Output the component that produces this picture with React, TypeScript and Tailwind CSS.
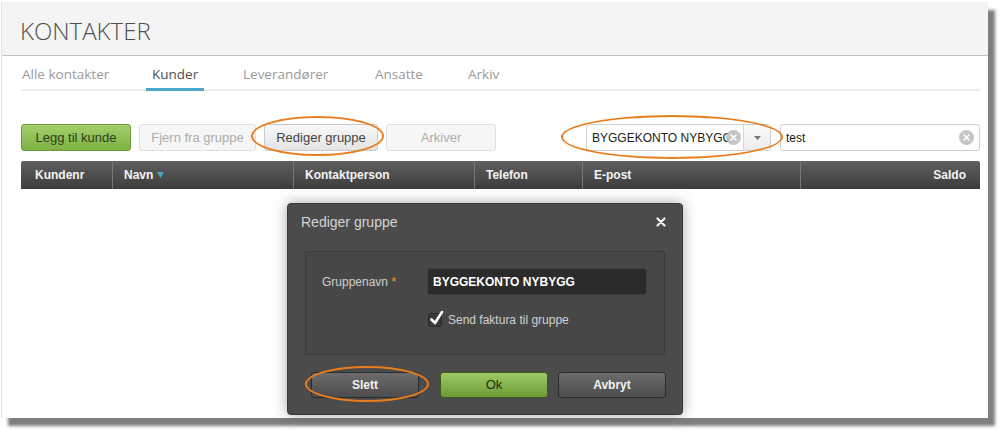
import React from "react";

const sans = { fontFamily: '"Liberation Sans", Arial, sans-serif' };

function ClearDot({ className = "" }: { className?: string }) {
  return (
    <span
      className={`flex h-[15px] w-[15px] items-center justify-center rounded-full bg-[#c4c4c4] ${className}`}
    >
      <svg width="7" height="7" viewBox="0 0 7 7">
        <path d="M1 1 L6 6 M6 1 L1 6" stroke="#fff" strokeWidth="1.6" strokeLinecap="round" />
      </svg>
    </span>
  );
}

function ToolButton({
  label,
  width,
  variant,
}: {
  label: string;
  width: string;
  variant: "green" | "disabled" | "normal";
}) {
  const styles = {
    green:
      "bg-gradient-to-b from-[#a4cf6a] to-[#7eb144] border-[#6f9c3a] text-[#2c4016]",
    disabled: "bg-[#f6f6f6] border-[#dedede] text-[#adadad]",
    normal:
      "bg-gradient-to-b from-[#f8f8f8] to-[#e4e4e4] border-[#c9c9c9] text-[#454545]",
  }[variant];
  return (
    <div
      className={`flex h-[27px] items-center justify-center rounded-[3px] border text-[13px] ${width} ${styles}`}
    >
      {label}
    </div>
  );
}

function DialogButton({ label, green }: { label: string; green?: boolean }) {
  return (
    <div
      className={
        green
          ? "flex h-[26px] w-[108px] items-center justify-center rounded-[3px] border border-[#3c5a1d] bg-gradient-to-b from-[#9fca66] to-[#6d9b34] text-[13px] text-[#1f2d10]"
          : "flex h-[26px] w-[108px] items-center justify-center rounded-[3px] border border-[#2c2c2c] bg-gradient-to-b from-[#6c6c6c] to-[#4c4c4c] text-[12px] font-bold text-[#f2f2f2]"
      }
    >
      {label}
    </div>
  );
}

const columns: { label: string; w: string; right?: boolean; sort?: boolean }[] = [
  { label: "Kundenr", w: "w-[91px]" },
  { label: "Navn", w: "w-[181px]", sort: true },
  { label: "Kontaktperson", w: "w-[181px]" },
  { label: "Telefon", w: "w-[108px]" },
  { label: "E-post", w: "w-[218px]" },
  { label: "Saldo", w: "flex-1", right: true },
];

// each tab sits in a fixed-width slot; only the active one is underlined
const tabs: { label: string; slot: string; first?: boolean; active?: boolean }[] = [
  { label: "Alle kontakter", slot: "w-[125px]", first: true },
  { label: "Kunder", slot: "w-[91px]", active: true },
  { label: "Leverandører", slot: "w-[132px]" },
  { label: "Ansatte", slot: "w-[93px]" },
  { label: "Arkiv", slot: "w-[60px]" },
];

export default function App() {
  return (
    <div className="relative h-[432px] w-[1001px] overflow-hidden bg-white pl-[1px] pt-[2px]" style={sans}>
      <div className="relative h-[416px] w-[987px] border-l border-[#e2e2e2] bg-white shadow-[7px_8px_3px_rgba(0,0,0,0.5)]">
        {/* page title */}
        <div className="flex h-[54px] items-center border-b border-[#c3c3c3] bg-[#f4f4f4] pl-[18px]">
          <h1
            className="pt-[4px] text-[24px] font-light text-[#505050]"
            style={{ fontFamily: '"Open Sans", "Segoe UI", sans-serif' }}
          >
            KONTAKTER
          </h1>
        </div>

        {/* tabs */}
        <div
          className="mx-[19px] mr-[8px] mt-[8px] flex border-b-2 border-[#ebebeb]"
          style={{ fontFamily: '"Open Sans", "Segoe UI", sans-serif' }}
        >
          {tabs.map((t) => (
            <div key={t.label} className={`-mb-[2px] flex ${t.slot}`}>
              <div
                className={`h-[27px] text-[13.5px] ${t.first ? "pl-[1px]" : "px-[6px]"} ${
                  t.active ? "border-b-[3px] border-[#4aa7c9] text-[#4f4f4f]" : "text-[#9a9a9a]"
                }`}
              >
                {t.label}
              </div>
            </div>
          ))}
        </div>

        {/* toolbar */}
        <div className="mx-[19px] mr-[8px] mt-[33px] flex items-center">
          <ToolButton label="Legg til kunde" width="w-[110px]" variant="green" />
          <div className="w-[8px]" />
          <ToolButton label="Fjern fra gruppe" width="w-[117px]" variant="disabled" />
          <div className="w-[8px]" />
          <ToolButton label="Rediger gruppe" width="w-[114px]" variant="normal" />
          <div className="w-[8px]" />
          <ToolButton label="Arkiver" width="w-[110px]" variant="disabled" />
          <div className="flex-1" />
          <div className="flex h-[27px] w-[185px] rounded-[3px] border border-[#cfcfcf] bg-white">
            <div className="relative flex flex-1 items-center overflow-hidden pl-[5px] text-[12px] text-[#222]">
              <span className="whitespace-nowrap">BYGGEKONTO NYBYGG</span>
              <ClearDot className="absolute right-[2px] top-[5px]" />
            </div>
            <div className="flex w-[27px] items-center justify-center border-l border-[#d6d6d6] bg-gradient-to-b from-[#fafafa] to-[#ececec]">
              <svg width="7" height="4" viewBox="0 0 7 4">
                <path d="M0 0 L7 0 L3.5 4 Z" fill="#777" />
              </svg>
            </div>
          </div>
          <div className="w-[9px]" />
          <div className="flex h-[27px] w-[200px] items-center justify-between rounded-[3px] border border-[#cfcfcf] bg-white pl-[5px] pr-[5px] text-[12px] text-[#222]">
            <span>test</span>
            <ClearDot />
          </div>
        </div>

        {/* table header */}
        <div className="mx-[19px] mr-[8px] mt-[10px] flex h-[28px] rounded-t-[2px] bg-gradient-to-b from-[#606060] to-[#3c3c3c] text-[12px] font-bold text-[#f4f4f4]">
          {columns.map((c, i) => (
            <div
              key={c.label}
              className={`flex items-center ${c.w} ${i > 0 ? "border-l border-[#777]" : ""} ${
                c.right ? "justify-end pr-[14px]" : i === 0 ? "pl-[14px]" : "pl-[11px]"
              }`}
            >
              {c.label}
              {c.sort && (
                <svg className="ml-[4px]" width="7" height="6" viewBox="0 0 7 6">
                  <path d="M0 0 L7 0 L3.5 6 Z" fill="#4aa7c9" />
                </svg>
              )}
            </div>
          ))}
        </div>

        {/* callout rings */}
        <div className="pointer-events-none absolute left-[249px] top-[114px] h-[40px] w-[133px] rounded-[50%] border-[2.5px] border-[#e97d1e]" />
        <div className="pointer-events-none absolute left-[559px] top-[113px] h-[44px] w-[222px] rounded-[50%] border-[2.5px] border-[#e97d1e]" />

        {/* edit group dialog */}
        <div className="absolute left-[285px] top-[201px] h-[212px] w-[396px] rounded-[4px] border border-[#383838] bg-[#4b4b4b] shadow-[0_0_14px_rgba(0,0,0,0.35)]">
          <div className="flex h-[35px] items-center justify-between pl-[13px] pr-[16px]">
            <span className="pt-[1px] text-[14px] text-[#d4d4d4]">Rediger gruppe</span>
            <svg width="10" height="10" viewBox="0 0 10 10">
              <path d="M1.5 1.5 L8.5 8.5 M8.5 1.5 L1.5 8.5" stroke="#f4f4f4" strokeWidth="2.2" strokeLinecap="round" />
            </svg>
          </div>
          <div className="ml-[17px] mt-[12px] h-[104px] w-[360px] rounded-[2px] border border-[#3b3b3b] bg-[#474747]">
            <div className="ml-[16px] mt-[16px] flex items-center">
              <span className="w-[105px] text-[12px] text-[#cfcfcf]">
                Gruppenavn <span className="text-[#e8a317]">*</span>
              </span>
              <div className="flex h-[27px] w-[220px] items-center rounded-[3px] border border-[#3e3e3e] bg-[#2b2b2b] pl-[5px] text-[12px] font-bold text-white">
                BYGGEKONTO NYBYGG
              </div>
            </div>
            <div className="ml-[122px] mt-[16px] flex items-center">
              <div className="relative h-[14px] w-[14px] rounded-[3px] border border-[#2a2a2a] bg-[#3a3a3a]">
                <svg className="absolute -top-[4px] left-[1px]" width="14" height="16" viewBox="0 0 14 16">
                  <path d="M1.5 9.5 L5 13 L12 2" stroke="#fff" strokeWidth="2.6" fill="none" strokeLinecap="round" strokeLinejoin="round" />
                </svg>
              </div>
              <span className="ml-[6px] text-[12px] text-[#d2d2d2]">Send faktura til gruppe</span>
            </div>
          </div>
          <div className="ml-[23px] mt-[17px] flex">
            <DialogButton label="Slett" />
            <div className="w-[21px]" />
            <DialogButton label="Ok" green />
            <div className="w-[10px]" />
            <DialogButton label="Avbryt" />
          </div>
        </div>
        <div className="pointer-events-none absolute left-[303px] top-[364px] h-[36px] w-[124px] rounded-[50%] border-[2.5px] border-[#e97d1e]" />
      </div>
    </div>
  );
}
